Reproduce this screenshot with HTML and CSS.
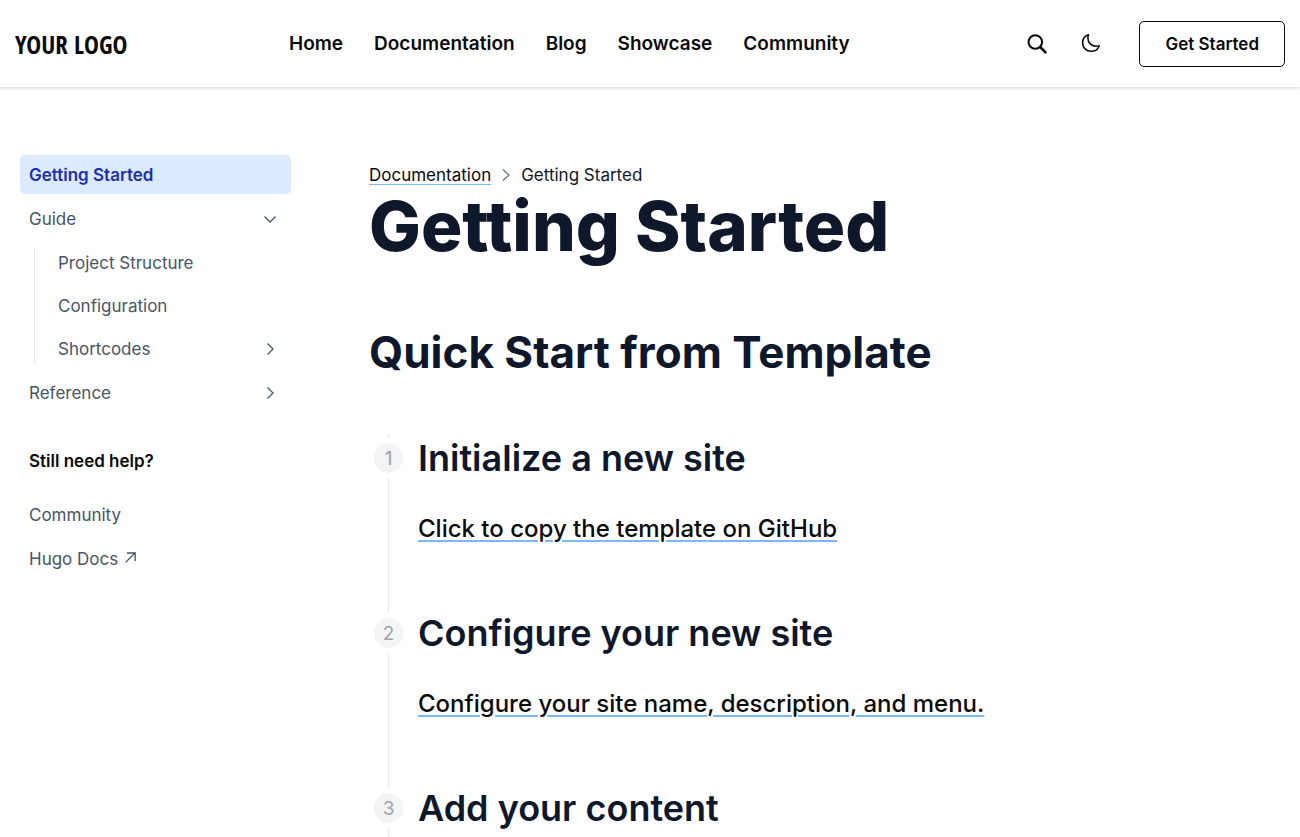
FILE: index.html
```html
<!DOCTYPE html>
<html lang="en">
<head>
<meta charset="utf-8">
<meta name="viewport" content="width=device-width, initial-scale=1">
<title>Getting Started</title>
<link rel="stylesheet" href="styles.css">
</head>
<body>
<header class="header">
  <a class="logo" href="#">YOUR LOGO</a>
  <nav class="nav" aria-label="Main">
    <a href="#">Home</a>
    <a href="#">Documentation</a>
    <a href="#">Blog</a>
    <a href="#">Showcase</a>
    <a href="#">Community</a>
  </nav>
  <div class="actions">
    <button class="icon-button" type="button" aria-label="Search">
      <svg width="22" height="22" viewBox="0 0 22 22" fill="none" stroke="currentColor" aria-hidden="true"><circle cx="9.300" cy="9" r="6.800" stroke-width="2"/><path d="M14.200 14l5.300 5.300" stroke-width="2.500" stroke-linecap="round"/></svg>
    </button>
    <button class="icon-button" type="button" aria-label="Toggle dark mode">
      <svg width="22" height="22" viewBox="0 0 24 24" fill="none" stroke="currentColor" stroke-width="1.7" stroke-linecap="round" stroke-linejoin="round" aria-hidden="true"><path d="M21 13.800A9.200 9.200 0 0 1 17.500 14.500C12.400 14.500 8.600 10.600 8.600 5.500c0-1.300.2-2.400.7-3.500A9.200 9.200 0 0 0 2.800 10.800C2.800 16 7 20 12.100 20a9.400 9.400 0 0 0 8.900-6.200z"/></svg>
    </button>
    <button class="cta" type="button">Get Started</button>
  </div>
</header>
<div class="page">
  <aside class="sidebar">
    <nav aria-label="Documentation">
      <ul class="menu">
        <li><a class="item active" href="#" aria-current="page">Getting Started</a></li>
        <li>
          <a class="item" href="#">Guide
            <svg class="chevron" viewBox="0 0 14 14" aria-hidden="true"><path d="M1.500 4.500L7 10l5.500-5.500"/></svg>
          </a>
          <ul class="menu submenu">
            <li><a class="item" href="#">Project Structure</a></li>
            <li><a class="item" href="#">Configuration</a></li>
            <li><a class="item" href="#">Shortcodes
              <svg class="chevron" viewBox="0 0 14 14" aria-hidden="true"><path d="M4.500 1.500L10 7l-5.500 5.500"/></svg>
            </a></li>
          </ul>
        </li>
        <li><a class="item" href="#">Reference
          <svg class="chevron" viewBox="0 0 14 14" aria-hidden="true"><path d="M4.500 1.500L10 7l-5.500 5.500"/></svg>
        </a></li>
      </ul>
    </nav>
    <nav class="help" aria-labelledby="help-title">
      <h2 class="help-title" id="help-title">Still need help?</h2>
      <ul class="menu">
        <li><a class="item" href="#">Community</a></li>
        <li><a class="item external" href="#">Hugo Docs
          <svg width="11" height="14" viewBox="0 0 11 14" fill="none" stroke="currentColor" stroke-width="1.300" aria-hidden="true"><path d="M.6 10.400L10 1M2 1h8.200v8"/></svg>
        </a></li>
      </ul>
    </nav>
  </aside>
  <main class="content">
    <nav class="breadcrumb" aria-label="Breadcrumb">
      <a href="#">Documentation</a>
      <svg class="separator" viewBox="0 0 14 14" aria-hidden="true"><path d="M4 1.500L10 7l-6 5.500"/></svg>
      <span>Getting Started</span>
    </nav>
    <h1 class="title">Getting Started</h1>
    <h2 class="section-title">Quick Start from Template</h2>
    <ol class="steps">
      <li class="step">
        <div class="marker"><span class="number">1</span></div>
        <div class="step-body">
          <h3>Initialize a new site</h3>
          <p><a href="#">Click to copy the template on GitHub</a></p>
        </div>
      </li>
      <li class="step">
        <div class="marker"><span class="number">2</span></div>
        <div class="step-body">
          <h3>Configure your new site</h3>
          <p><a href="#">Configure your site name, description, and menu.</a></p>
        </div>
      </li>
      <li class="step">
        <div class="marker"><span class="number">3</span></div>
        <div class="step-body">
          <h3>Add your content</h3>
        </div>
      </li>
    </ol>
  </main>
</div>
</body>
</html>
```
FILE: styles.css
```css
* {
  box-sizing: border-box;
}

body {
  margin: 0;
  background: #fff;
  color: #0f172a;
  font-family: Inter, sans-serif;
  font-size: 17px;
}

h1, h2, h3, p, ul, ol {
  margin: 0;
  padding: 0;
}

ul, ol {
  list-style: none;
}

a {
  color: inherit;
  text-decoration: none;
}

button {
  font: inherit;
  color: inherit;
  background: none;
  border: 0;
  padding: 0;
  cursor: pointer;
}

svg {
  display: block;
  flex: none;
}

.header {
  display: grid;
  grid-template-columns: 274px 1fr auto;
  align-items: center;
  height: 87px;
  padding: 0 15px;
  color: #0a0a0a;
  box-shadow: 0 1px 3px rgba(0, 0, 0, 0.2);
}

.logo {
  font-family: "Liberation Sans Narrow", "Open Sans Condensed", "DejaVu Sans Condensed", sans-serif;
  font-size: 25px;
  font-weight: 700;
  white-space: nowrap;
}

.nav {
  display: flex;
  gap: 31px;
  font-size: 19px;
  font-weight: 600;
}

.actions {
  display: flex;
  align-items: center;
}

.icon-button {
  margin-right: 32px;
}

.cta {
  height: 46px;
  margin-left: 5px;
  padding: 0 25px;
  border: 1px solid #0a0a0a;
  border-radius: 5px;
  font-size: 17px;
  font-weight: 600;
}

.page {
  display: grid;
  grid-template-columns: 271px 1fr;
  gap: 78px;
  padding: 68px 20px 0;
}

.menu {
  display: grid;
  gap: 5px;
}

.item {
  display: flex;
  align-items: center;
  justify-content: space-between;
  height: 39px;
  padding: 0 14px 0 9px;
  border-radius: 5px;
  color: #475569;
}

.active {
  background: #dbeafe;
  color: #1e2fae;
  font-weight: 600;
}

.submenu {
  gap: 4px;
  margin: 5px 0 0 14px;
  padding-left: 15px;
  background: linear-gradient(#e5e7eb, #e5e7eb) left center / 1px calc(100% - 10px) no-repeat;
}

.chevron, .separator {
  width: 14px;
  height: 14px;
  fill: none;
  stroke: currentColor;
  stroke-width: 1.3;
}

.separator {
  color: #64748b;
}

.help {
  margin-top: 37px;
}

.help-title {
  margin-bottom: 22px;
  padding-left: 9px;
  color: #0a0a0a;
  font-size: 17px;
  font-weight: 600;
  line-height: 24px;
}

.external {
  justify-content: flex-start;
  gap: 7px;
}

.breadcrumb {
  display: flex;
  align-items: center;
  gap: 8px;
  height: 39px;
}

.breadcrumb a, .step-body a {
  color: #0a0a0a;
  text-decoration: underline #7db8fb;
  text-underline-offset: 3px;
  text-decoration-thickness: 1px;
}

.title {
  font-size: 69px;
  font-weight: 800;
  line-height: 64px;
}

.section-title {
  margin-top: 66px;
  font-size: 44px;
  font-weight: 700;
  line-height: 56px;
}

.steps {
  margin-top: 54px;
}

.step {
  display: grid;
  grid-template-columns: 39px 1fr;
  gap: 10px;
}

.step:last-child .step-body {
  padding-bottom: 5px;
}

.marker {
  display: flex;
  justify-content: center;
  align-items: flex-start;
  background: linear-gradient(#e5e7eb, #e5e7eb) center / 1px 100% no-repeat;
}

.number {
  display: grid;
  place-items: center;
  box-sizing: content-box;
  width: 30px;
  height: 30px;
  margin-top: 4px;
  border: 5px solid #fff;
  border-radius: 50%;
  background: #f3f4f6;
  color: #a3a3a3;
  font-size: 19px;
}

.step-body h3 {
  font-size: 36px;
  font-weight: 600;
  line-height: 48px;
}

.step-body p {
  margin: 27px 0 60px;
  font-size: 24px;
  font-weight: 500;
  line-height: 40px;
}

.step-body a {
  text-decoration-thickness: 2px;
}
```
